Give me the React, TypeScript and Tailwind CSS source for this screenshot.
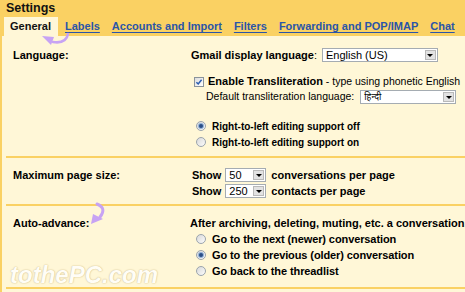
import React from 'react';

function Select({ className, children }: { className: string; children: React.ReactNode }) {
    return (
        <div className={`flex shrink-0 items-stretch border border-[#a5acb2] bg-white ${className}`}>
            <div className="flex flex-1 items-center overflow-hidden whitespace-nowrap pl-[3px] text-[11px] font-normal leading-[12px]">
                {children}
            </div>
            <div className="m-px flex w-[11px] items-center justify-center border border-[#b9b9b9] bg-[#e2e2e2]">
                <span className="h-0 w-0 border-x-[3px] border-t-[3px] border-x-transparent border-t-black" />
            </div>
        </div>
    );
}

function Radio({ checked }: { checked?: boolean }) {
    return (
        <span className="flex h-[10px] w-[10px] shrink-0 items-center justify-center rounded-full border border-[#9ba4ad] bg-linear-to-br from-[#d9d9d9] to-[#fbfbfb]">
            {checked && <span className="h-[4px] w-[4px] rounded-full bg-[#2c4f86] ring-1 ring-[#8fb0d8]" />}
        </span>
    );
}

function Checkbox() {
    return (
        <span className="flex h-[10px] w-[10px] shrink-0 items-center justify-center border border-[#8a939b] bg-linear-to-br from-[#dcdcdc] to-white">
            <svg viewBox="0 0 8 8" className="h-[8px] w-[8px]">
                <path d="M1.4 4.2 L3.2 6 L6.6 1.8" fill="none" stroke="#2a5cb0" strokeWidth="1.5" />
            </svg>
        </span>
    );
}

function RadioRow({ checked, label, small }: { checked?: boolean; label: string; small?: boolean }) {
    return (
        <div className="flex h-[16px] items-center pl-[6px]">
            <Radio checked={checked} />
            <span className={`ml-[6px] whitespace-nowrap font-bold ${small ? 'text-[10px]' : 'tracking-[-0.1px]'}`}>
                {label}
            </span>
        </div>
    );
}

const tabs = ['Labels', 'Accounts and Import', 'Filters', 'Forwarding and POP/IMAP', 'Chat'];

export default function App() {
    return (
        <div className="relative h-[292px] w-[465px] overflow-hidden bg-[#fad163] font-['Liberation_Sans',Arial,sans-serif] text-[11px] text-black">
            <div className="h-[17px] pl-[6px] text-[12.5px] font-bold leading-[16px] text-[#111]">Settings</div>

            {/* tabs */}
            <div className="flex h-[19px] whitespace-nowrap font-bold leading-[13px]">
                <div className="ml-[4px] w-[54px] bg-[#fff7d7] pl-[6px] pt-[3px] text-[#111]">General</div>
                <div className="ml-[7px] flex gap-[12px] pt-[3px]">
                    {tabs.map((tab) => (
                        <span key={tab} className="text-[#2a55a8] underline decoration-1 underline-offset-[2px]">
                            {tab}
                        </span>
                    ))}
                </div>
            </div>

            <div className="ml-[2px] w-[700px] bg-[#fff7d7] pl-[4px] font-bold">
                {/* language */}
                <div className="grid grid-cols-[184px_1fr] border-b-2 border-[#fad163] pb-[6px] pt-[12px]">
                    <div className="pl-[7px] leading-[14px]">Language:</div>
                    <div className="flex flex-col">
                        <div className="flex h-[14px] items-center whitespace-nowrap pl-px">
                            Gmail display language<span className="font-normal">:</span>
                            <Select className="ml-[5px] h-[14px] w-[116px]">English (US)</Select>
                        </div>
                        <div className="mt-[13px] flex h-[13px] items-center whitespace-nowrap pl-[4px]">
                            <Checkbox />
                            <span className="ml-[4px]">Enable Transliteration</span>
                            <span className="whitespace-pre text-[10.5px] font-normal"> - type using phonetic English</span>
                        </div>
                        <div className="mt-[2px] flex h-[14px] items-center whitespace-nowrap pl-[16px] text-[10.5px] font-normal">
                            Default transliteration language:
                            <Select className="ml-[6px] h-[14px] w-[96px]">
                                <span className="text-[9px] font-['Noto_Sans','Noto_Sans_Devanagari',sans-serif]">हिन्दी</span>
                            </Select>
                        </div>
                        <div className="mt-[14px]">
                            <RadioRow checked small label="Right-to-left editing support off" />
                            <RadioRow small label="Right-to-left editing support on" />
                        </div>
                    </div>
                </div>

                {/* page size */}
                <div className="grid grid-cols-[184px_1fr] border-b-2 border-[#fad163] pb-[5px] pt-[9px]">
                    <div className="pl-[7px] leading-[16px]">Maximum page size:</div>
                    <div className="flex flex-col whitespace-nowrap pl-[2px]">
                        <div className="flex h-[16px] items-center">
                            Show
                            <Select className="ml-[4px] h-[14px] w-[41px]">50</Select>
                            <span className="ml-[5px]">conversations per page</span>
                        </div>
                        <div className="flex h-[16px] items-center">
                            Show
                            <Select className="ml-[4px] h-[14px] w-[41px]">250</Select>
                            <span className="ml-[5px]">contacts per page</span>
                        </div>
                    </div>
                </div>

                {/* auto-advance */}
                <div className="grid grid-cols-[184px_1fr] border-b-2 border-[#fad163] pb-[8px] pt-[9px]">
                    <div className="pl-[7px] leading-[16px]">Auto-advance:</div>
                    <div className="flex flex-col">
                        <div className="h-[16px] whitespace-nowrap leading-[16px]">
                            After archiving, deleting, muting, etc. a conversation:
                        </div>
                        <RadioRow label="Go to the next (newer) conversation" />
                        <RadioRow checked label="Go to the previous (older) conversation" />
                        <RadioRow label="Go back to the threadlist" />
                    </div>
                </div>
                <div className="h-[10px]" />
            </div>

            {/* annotation arrows */}
            <svg className="absolute left-[40px] top-[32px] h-[14px] w-[30px]" viewBox="0 0 30 14">
                <path d="M28 2 Q26 12 13 10" fill="none" stroke="#c7a3f4" strokeWidth="2.6" strokeLinecap="round" />
                <polygon points="2,4 14,5 11,13" fill="#c7a3f4" />
            </svg>
            <svg className="absolute left-[88px] top-[202px] h-[24px] w-[20px]" viewBox="0 0 20 24">
                <path d="M9 2 Q19 6 12 15" fill="none" stroke="#c7a3f4" strokeWidth="3" strokeLinecap="round" />
                <polygon points="3,22 5,12 15,17" fill="#c7a3f4" />
            </svg>

            {/* watermark */}
            <div className="absolute left-[10px] top-[262px] text-[24px] font-bold italic leading-[26px] text-[#fffdf6] [text-shadow:0_0_1px_#c9b888,0_0_2px_#e2d3a4]">
                tothePC.com
            </div>
        </div>
    );
}
